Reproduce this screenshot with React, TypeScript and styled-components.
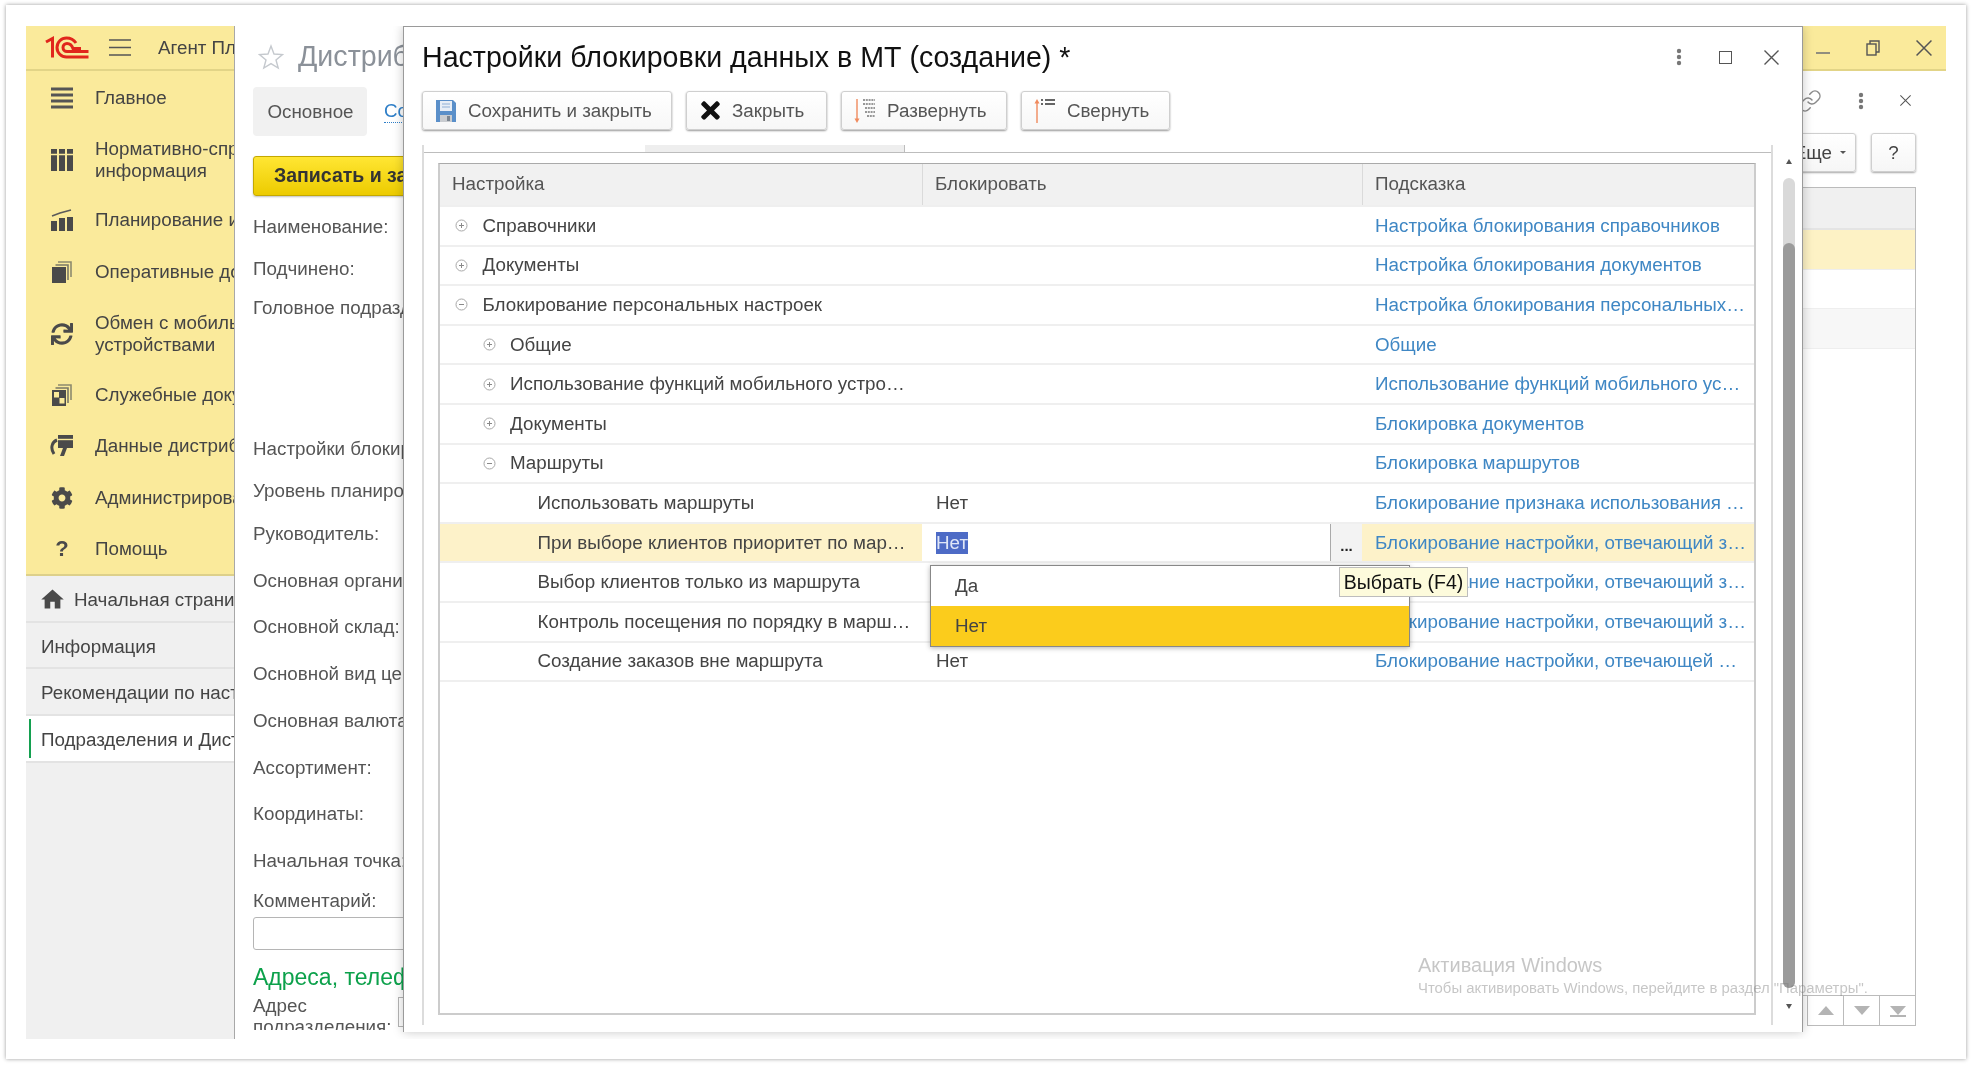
import React from "react";
import styled, { createGlobalStyle } from "styled-components";
import { FaCog, FaSync, FaTimes } from "react-icons/fa";
import { MdHome } from "react-icons/md";
import { Link as LinkIcon } from "lucide-react";

const GlobalStyle = createGlobalStyle`
  html, body {
    margin: 0;
    padding: 0;
    background: #fff;
    overflow: hidden;
  }
  * {
    box-sizing: border-box;
  }
  svg {
    flex-shrink: 0;
  }
`;

const font = `"Liberation Sans", Arial, sans-serif`;
const yellow = "#faea9b";
const textSize = "18.8px";

const Logo = () => (
  <svg width="45" height="23" viewBox="0 0 45 23" fill="none" stroke="#e1261c" strokeWidth="3">
    <path d="M1 6 L7.5 2.5 V21.5" />
    <path d="M43.5 21 H21.5 A9.5 9.5 0 0 1 21.5 2 C26 2 29 4 31 7" />
    <path d="M43.5 15.5 H22 A4 4 0 0 1 22 7.5 C25 7.5 27 9.5 28 12.5 H36" />
  </svg>
);

const Burger = () => (
  <svg width="22" height="17" viewBox="0 0 22 17" stroke="#555" strokeWidth="1.6">
    <path d="M0 1 H22 M0 8.5 H22 M0 16 H22" />
  </svg>
);

const MainIcon = () => (
  <svg width="22" height="22" viewBox="0 0 22 22" stroke="#555" strokeWidth="3">
    <path d="M0 2 H22 M0 8 H22 M0 14 H22 M0 20 H22" />
  </svg>
);

const RefIcon = () => (
  <svg width="22" height="22" viewBox="0 0 22 22" fill="#4a4a4a">
    <rect x="0" y="0" width="6" height="22" />
    <rect x="8" y="0" width="6" height="22" />
    <rect x="16" y="0" width="6" height="22" />
    <path d="M0 5.5 H22" stroke={yellow} strokeWidth="1.5" />
  </svg>
);

const PlanIcon = () => (
  <svg width="22" height="22" viewBox="0 0 22 22" fill="#4a4a4a">
    <rect x="0" y="12" width="6" height="10" />
    <rect x="8" y="9" width="6" height="13" />
    <rect x="16" y="8" width="6" height="14" />
    <path d="M1 7 L9 4 L20 1" stroke="#5a5a5a" strokeWidth="1.6" fill="none" />
  </svg>
);

const PagesIcon = ({ $inner }: { $inner?: boolean }) => (
  <svg width="20" height="22" viewBox="0 0 20 22" fill="#4a4a4a">
    <path d="M6 1 H19 V16" fill="none" stroke="#8d8a6e" strokeWidth="1.6" />
    <path d="M3.5 4 H16 V19" fill="none" stroke="#7a7866" strokeWidth="1.6" />
    <rect x="0" y="6" width="14" height="16" />
    {$inner && (
      <>
        <rect x="2" y="8" width="5" height="5.5" fill={yellow} />
        <rect x="7.5" y="14" width="5" height="5.5" fill={yellow} />
      </>
    )}
  </svg>
);

const DataIcon = () => (
  <svg width="24" height="22" viewBox="0 0 24 22">
    <path d="M7 5 C2 7 0 13 4 19" fill="none" stroke="#4a4a4a" strokeWidth="3" />
    <path d="M8 0 H23 V13 H17 L14 21 H10 L13 13 H8 Z" fill="#4a4a4a" />
    <path d="M8 4.5 H23" stroke={yellow} strokeWidth="1.4" />
  </svg>
);

const StarIcon = () => (
  <svg width="26" height="26" viewBox="0 0 26 26" fill="none" stroke="#c5c9ce" strokeWidth="1.4">
    <path d="M13 2 L16 10 L24.5 10.5 L18 16 L20.2 24 L13 19.6 L5.8 24 L8 16 L1.5 10.5 L10 10 Z" />
  </svg>
);

const SaveIcon = () => (
  <svg width="22" height="24" viewBox="0 0 22 24">
    <path d="M1 1 H18 L21 4 V23 H1 Z" fill="#5a8fc9" />
    <rect x="5" y="2" width="12" height="10" fill="#e8eef6" />
    <path d="M7 5 H15 M7 8 H15" stroke="#8fb0d6" strokeWidth="1.2" />
    <rect x="5" y="16" width="12" height="7" fill="#c9ccd0" />
    <rect x="12" y="17" width="3" height="5" fill="#7c8590" />
  </svg>
);

const ExpandIcon = () => (
  <svg width="22" height="26" viewBox="0 0 22 26" fill="none">
    <path d="M3 1 V23" stroke="#f08a5d" strokeWidth="1.4" />
    <path d="M0.5 20.5 L3 25 L5.5 20.5 Z" fill="#f08a5d" />
    <path d="M9 2 H21 M9 6 H21 M11 10 H21 M11 14 H21 M13 18 H21" stroke="#777" strokeWidth="1.6" strokeDasharray="2 0.8" />
  </svg>
);

const CollapseIcon = () => (
  <svg width="22" height="26" viewBox="0 0 22 26" fill="none">
    <path d="M3 3 V25" stroke="#f08a5d" strokeWidth="1.4" />
    <path d="M0.5 5.5 L3 1 L5.5 5.5 Z" fill="#f08a5d" />
    <path d="M7 2 H9 M7 6 H9 M11 2 H21 M11 6 H21" stroke="#666" strokeWidth="2" />
  </svg>
);

const TreeToggle = ({ $open }: { $open?: boolean }) => (
  <svg width="13" height="13" viewBox="0 0 13 13" fill="none" stroke="#a8a8a8">
    <circle cx="6.5" cy="6.5" r="5.5" />
    <path d={$open ? "M4 6.5 H9" : "M4 6.5 H9 M6.5 4 V9"} stroke="#8a8a8a" />
  </svg>
);

const Dots = () => (
  <svg width="6" height="18" viewBox="0 0 6 18" fill="#777">
    <circle cx="3" cy="3" r="2.2" />
    <circle cx="3" cy="9" r="2.2" />
    <circle cx="3" cy="15" r="2.2" />
  </svg>
);

const MinIcon = () => (
  <svg width="14" height="14" viewBox="0 0 14 14" stroke="#777" strokeWidth="1.6">
    <path d="M0 12 H14" />
  </svg>
);

const RestoreIcon = () => (
  <svg width="14" height="16" viewBox="0 0 14 16" fill="none" stroke="#555" strokeWidth="1.4">
    <rect x="1" y="4" width="9" height="11" />
    <path d="M4 4 V1 H13 V12 H10" />
  </svg>
);

const CloseIcon = ({ $size = 15 }: { $size?: number }) => (
  <svg width={$size} height={$size} viewBox="0 0 15 15" stroke="#555" strokeWidth="1.4">
    <path d="M0.5 0.5 L14.5 14.5 M14.5 0.5 L0.5 14.5" />
  </svg>
);

const Sheet = styled.div`
  width: 1972px;
  height: 1065px;
  padding: 5px 6px 6px;
  background: #fff;
  font-family: ${font};
  filter: blur(0.35px);
`;

const Card = styled.div`
  height: 100%;
  padding: 21px 20px 20px;
  background: #fff;
  box-shadow: 0 0 4px rgba(0, 0, 0, 0.4);
`;

const AppFrame = styled.div`
  position: relative;
  display: flex;
  flex-direction: column;
  height: 100%;
  overflow: hidden;
`;

const TopBar = styled.div`
  flex: none;
  display: flex;
  align-items: center;
  justify-content: space-between;
  height: 45px;
  padding: 0 14px 0 19px;
  background: ${yellow};
  border-bottom: 2px solid #e2d487;
`;

const TopLeft = styled.div`
  display: flex;
  align-items: center;
`;

const AppName = styled.span`
  margin-left: 27px;
  font-size: ${textSize};
  color: #444;
`;

const BurgerSlot = styled.span`
  display: flex;
  margin-left: 19px;
`;

const WindowButtons = styled.div`
  display: flex;
  align-items: center;
  gap: 36px;
`;

const Body = styled.div`
  flex: 1;
  display: flex;
  min-height: 0;
`;

const Sidebar = styled.div`
  flex: none;
  display: flex;
  flex-direction: column;
  width: 209px;
  background: #f0f0f0;
`;

const Sections = styled.div`
  padding-bottom: 1px;
  background: ${yellow};
  border-bottom: 2px solid #ddd08a;
`;

const SectionItem = styled.div<{ $h: number }>`
  display: flex;
  align-items: center;
  height: ${(p) => p.$h}px;
  padding-left: 25px;
  color: #444;
  font-size: ${textSize};
  line-height: 22px;
  white-space: nowrap;
`;

const SectionIcon = styled.span`
  flex: none;
  display: flex;
  align-items: center;
  justify-content: center;
  width: 22px;
  height: 24px;
  margin-right: 22px;
  color: #4a4a4a;
  font-size: 22px;
  font-weight: 700;
`;

const OpenTab = styled.div<{ $active?: boolean }>`
  position: relative;
  display: flex;
  align-items: center;
  gap: 8px;
  height: 46.7px;
  padding: 3px 0 0 15px;
  background: ${(p) => (p.$active ? "#fff" : "#f0f0f0")};
  border-bottom: 2px solid #e3e3e3;
  color: #444;
  font-size: ${textSize};
  white-space: nowrap;

  ${(p) =>
    p.$active &&
    `&::before {
      content: "";
      position: absolute;
      left: 3px;
      top: 3px;
      bottom: 3px;
      width: 2px;
      background: #14a050;
    }`}
`;

const HomeIcon = styled(MdHome)`
  margin-left: -2px;
  color: #4a4a4a;
  font-size: 27px;
`;

const Page = styled.div`
  flex: 1;
  display: flex;
  flex-direction: column;
  align-items: flex-end;
  padding: 0 30px 13px 0;
  background: #fff;
`;

const PageHead = styled.div`
  flex: none;
  display: flex;
  align-items: center;
  gap: 36px;
  height: 62px;
  padding: 0 5px 3px 0;
  color: #8a8a8a;
`;

const PageTools = styled.div`
  flex: none;
  display: flex;
  gap: 15px;
`;

const PageTool = styled.div`
  display: flex;
  align-items: center;
  justify-content: center;
  gap: 8px;
  height: 39px;
  min-width: 45px;
  padding: 0 9px;
  background: linear-gradient(#fff, #f6f6f6);
  border: 1px solid #cfcfcf;
  border-radius: 3px;
  box-shadow: 0 1px 2px rgba(0, 0, 0, 0.35);
  color: #444;
  font-size: ${textSize};
`;

const Caret = styled.span`
  width: 0;
  height: 0;
  border: 3.5px solid transparent;
  border-top-color: #555;
  border-bottom: 0;
`;

const SideTable = styled.div`
  flex: 1;
  display: flex;
  flex-direction: column;
  width: 500px;
  margin-top: 15px;
  border: 1px solid #bbb;
  border-bottom: 0;
`;

const SideHead = styled.div`
  height: 42px;
  background: #f0f0f0;
  border-bottom: 2px solid #e4e4e4;
`;

const SideRow = styled.div<{ $tone: string }>`
  height: 39.6px;
  background: ${(p) => p.$tone};
  border-bottom: 1px solid #eee;
`;

const SideFill = styled.div`
  flex: 1;
`;

const Pager = styled.div`
  flex: none;
  display: flex;
  justify-content: flex-end;
  height: 31px;
  border-top: 1px solid #bbb;
`;

const PagerButton = styled.div`
  display: flex;
  align-items: center;
  justify-content: center;
  width: 36px;
  border-left: 1px solid #bbb;
  border-bottom: 1px solid #bbb;
`;

const Triangle = styled.span<{ $up?: boolean; $bar?: boolean }>`
  width: 0;
  height: 0;
  border: 8px solid transparent;
  ${(p) =>
    p.$up
      ? "border-bottom: 9px solid #b4b4b4; border-top: 0;"
      : "border-top: 9px solid #b4b4b4; border-bottom: 0;"}
  ${(p) => p.$bar && "box-shadow: 0 2px 0 #b4b4b4;"}
`;

const FormWindow = styled.div`
  position: absolute;
  left: 208px;
  top: 0;
  bottom: 0;
  width: 170px;
  background: #fff;
  border-left: 1px solid #a8a8a8;
`;

const FormInner = styled.div`
  height: 1004px;
  padding-left: 18px;
  overflow: hidden;
  white-space: nowrap;
`;

const FormHead = styled.div`
  display: flex;
  align-items: center;
  gap: 14px;
  height: 61px;
  padding-left: 5px;
  color: #8b9199;
  font-size: 28.6px;
`;

const FormTabs = styled.div`
  display: flex;
  align-items: center;
  gap: 17px;
`;

const FormTab = styled.div`
  flex: none;
  display: flex;
  align-items: center;
  justify-content: center;
  width: 114px;
  height: 49px;
  padding: 1px 0 0 1px;
  background: #f1f1f1;
  border-radius: 4px;
  color: #555;
  font-size: ${textSize};
`;

const FormLink = styled.span`
  color: #2f7fc8;
  font-size: ${textSize};
  border-bottom: 1px dotted #2f7fc8;
`;

const WriteButton = styled.div`
  display: flex;
  align-items: center;
  width: 240px;
  height: 40px;
  margin-top: 20px;
  padding: 0 0 2px 20px;
  background: linear-gradient(#ffe633, #eccb00);
  border: 1px solid #c4a800;
  border-radius: 3px;
  box-shadow: 0 1px 2px rgba(0, 0, 0, 0.25);
  color: #333;
  font-size: 19.5px;
  font-weight: 700;
`;

const FormLabel = styled.div<{ $gap: number }>`
  margin-top: ${(p) => p.$gap}px;
  color: #555;
  font-size: ${textSize};
  line-height: 24px;
`;

const CommentBox = styled.div`
  width: 240px;
  height: 33px;
  margin-top: 4px;
  border: 1px solid #b5b5b5;
  border-radius: 3px;
`;

const AddressHead = styled.div`
  margin-top: 13px;
  color: #0ca14b;
  font-size: 23px;
  line-height: 28px;
`;

const AddressRow = styled.div`
  display: flex;
  margin-top: 4px;
`;

const AddressLabel = styled.div`
  flex: none;
  width: 145px;
  color: #555;
  font-size: ${textSize};
  line-height: 21px;
`;

const AddressBox = styled.div`
  width: 60px;
  height: 30px;
  margin-top: 2px;
  border: 1px solid #b5b5b5;
`;

const Modal = styled.div`
  position: absolute;
  left: 377px;
  top: 0;
  display: flex;
  flex-direction: column;
  width: 1400px;
  height: 1006px;
  background: #fff;
  border: 1px solid #9a9a9a;
  border-bottom: 0;
  box-shadow: 0 0 10px rgba(0, 0, 0, 0.22);
`;

const ModalHead = styled.div`
  flex: none;
  display: flex;
  align-items: center;
  height: 64px;
  padding: 0 23px 4px 18px;
`;

const ModalTitle = styled.h1`
  flex: 1;
  margin: 0;
  color: #111;
  font-size: 28.6px;
  font-weight: 400;
`;

const ModalControls = styled.div`
  display: flex;
  align-items: center;
  gap: 32px;
`;

const ControlDots = styled.span`
  display: flex;
  margin-right: 5px;
`;

const MaxBox = styled.span`
  width: 13px;
  height: 13px;
  border: 1.5px solid #555;
`;

const Toolbar = styled.div`
  flex: none;
  display: flex;
  gap: 14px;
  padding-left: 18px;
`;

const ToolButton = styled.div<{ $w: number }>`
  display: flex;
  align-items: center;
  gap: 10px;
  width: ${(p) => p.$w}px;
  height: 39px;
  padding-left: 11px;
  background: linear-gradient(#fff, #f7f7f7);
  border: 1px solid #cfcfcf;
  border-radius: 3px;
  box-shadow: 0 1px 2px rgba(0, 0, 0, 0.4);
  color: #555;
  font-size: ${textSize};
  white-space: nowrap;
`;

const ToolIcon = styled.span`
  flex: none;
  display: flex;
  align-items: center;
  justify-content: center;
  width: 24px;
  color: #111;
  font-size: 27px;
`;

const ModalBody = styled.div`
  flex: 1;
  display: flex;
  min-height: 0;
  margin-top: 15px;
  padding: 0 0 7px 18px;
`;

const Group = styled.div`
  flex: none;
  display: flex;
  flex-direction: column;
  width: 1351px;
  border-left: 2px solid #dcdcdc;
  border-right: 2px solid #dcdcdc;
`;

const GroupTop = styled.div`
  flex: none;
  display: flex;
  height: 8px;
  padding-left: 221px;
  border-bottom: 1px solid #bdbdbd;
`;

const GroupTabStub = styled.div`
  width: 260px;
  background: #eee;
  border-right: 1px solid #bdbdbd;
`;

const Grid = styled.div`
  flex: 1;
  margin: 10px 15px 10px 14px;
  border: 2px solid #ccc;
  border-top-width: 1px;
  border-top-color: #aaa;
  min-height: 0;
`;

const HeadRow = styled.div`
  display: grid;
  grid-template-columns: 482px 440px 1fr;
  height: 41px;
  background: #f1f1f1;
`;

const HeadCell = styled.div`
  display: flex;
  align-items: center;
  padding: 0 0 2px 12px;
  color: #555;
  font-size: ${textSize};

  & + & {
    border-left: 1px solid #dadada;
  }
`;

const Row = styled.div`
  display: grid;
  grid-template-columns: 482px 440px 1fr;
  height: 39.6px;
  border-top: 2px solid #efefef;

  &:last-child {
    height: 41.6px;
    border-bottom: 2px solid #efefef;
  }
`;

const NameCell = styled.div<{ $level: number; $selected?: boolean }>`
  display: flex;
  align-items: center;
  padding-left: ${(p) => 15 + p.$level * 27.5}px;
  background: ${(p) => (p.$selected ? "#fdf2c9" : "transparent")};
  color: #444;
  font-size: ${textSize};
  white-space: nowrap;
`;

const ToggleSlot = styled.span`
  flex: none;
  display: flex;
  width: 27.5px;
`;

const ValueCell = styled.div`
  display: flex;
  align-items: center;
  padding-left: 14px;
  color: #444;
  font-size: ${textSize};
`;

const SelectedValue = styled.span`
  padding: 0;
  background: #4d6bc6;
  color: #dfe6f7;
  line-height: 22px;
`;

const EditorSpacer = styled.span`
  flex: 1;
`;

const PickButton = styled.span`
  flex: none;
  display: flex;
  align-items: flex-end;
  justify-content: center;
  align-self: stretch;
  width: 32px;
  padding-bottom: 8px;
  background: #f3f3f3;
  border-left: 1px solid #aaa;
  color: #222;
  font-size: 15px;
  font-weight: 700;
  line-height: 14px;
`;

const HintCell = styled.div<{ $selected?: boolean }>`
  display: flex;
  align-items: center;
  padding-left: 13px;
  background: ${(p) => (p.$selected ? "#fdf2c9" : "transparent")};
  color: #3f87c4;
  font-size: ${textSize};
  white-space: nowrap;
  overflow: hidden;
`;

const ScrollColumn = styled.div`
  flex: none;
  display: flex;
  flex-direction: column;
  align-items: center;
  width: 12px;
  margin-left: 10px;
`;

const ScrollArrow = styled.div<{ $h: number }>`
  flex: none;
  display: flex;
  align-items: center;
  justify-content: center;
  height: ${(p) => p.$h}px;
`;

const ScrollTriangle = styled.span<{ $up?: boolean }>`
  width: 0;
  height: 0;
  border: 3px solid transparent;
  ${(p) =>
    p.$up
      ? "border-bottom: 5px solid #555; border-top: 0;"
      : "border-top: 5px solid #555; border-bottom: 0;"}
`;

const ScrollTrack = styled.div`
  flex: 1;
  width: 12px;
  padding-top: 65px;
  background: #d9d9d9;
  border-radius: 6px;
`;

const ScrollThumb = styled.div`
  height: 100%;
  background: #9b9b9b;
  border-radius: 6px;
`;

const Dropdown = styled.div`
  position: absolute;
  left: 526px;
  top: 538px;
  width: 480px;
  height: 82px;
  background: #fff;
  border: 1px solid #888;
  box-shadow: 0 1px 5px rgba(0, 0, 0, 0.3);
`;

const DropdownItem = styled.div<{ $active?: boolean }>`
  display: flex;
  align-items: center;
  height: 40px;
  padding-left: 24px;
  background: ${(p) => (p.$active ? "#fbcc1c" : "#fff")};
  color: #444;
  font-size: ${textSize};
`;

const Tip = styled.div`
  position: absolute;
  left: 935px;
  top: 540px;
  display: flex;
  align-items: center;
  justify-content: center;
  width: 129px;
  height: 30px;
  background: #fdfbdc;
  border: 1px solid #bdbdbd;
  color: #111;
  font-size: 19.5px;
  white-space: nowrap;
`;

const Watermark = styled.div`
  position: absolute;
  left: 1392px;
  top: 926px;
  color: rgba(120, 120, 120, 0.42);
  pointer-events: none;
  white-space: nowrap;
`;

const WatermarkTitle = styled.div`
  font-size: 20px;
  line-height: 26px;
`;

const WatermarkText = styled.div`
  font-size: 14.9px;
  line-height: 20px;
`;

const sections = [
  { h: 54, text: "Главное", icon: <MainIcon /> },
  { h: 70, text: <>Нормативно-справочная<br />информация</>, icon: <RefIcon /> },
  { h: 50, text: "Планирование и", icon: <PlanIcon /> },
  { h: 54, text: "Оперативные документы", icon: <PagesIcon /> },
  { h: 70, text: <>Обмен с мобильными<br />устройствами</>, icon: <FaSync /> },
  { h: 52, text: "Служебные документы", icon: <PagesIcon $inner /> },
  { h: 50, text: "Данные дистрибьютора", icon: <DataIcon /> },
  { h: 54, text: "Администрирование", icon: <FaCog /> },
  { h: 48, text: "Помощь", icon: "?" },
];

const formLabels = [
  { gap: 19, text: "Наименование:" },
  { gap: 18, text: "Подчинено:" },
  { gap: 15, text: "Головное подразделение:" },
  { gap: 117, text: "Настройки блокировки:" },
  { gap: 18, text: "Уровень планирования:" },
  { gap: 19, text: "Руководитель:" },
  { gap: 23, text: "Основная организация:" },
  { gap: 22, text: "Основной склад:" },
  { gap: 23, text: "Основной вид цены:" },
  { gap: 23, text: "Основная валюта:" },
  { gap: 23, text: "Ассортимент:" },
  { gap: 22, text: "Координаты:" },
  { gap: 23, text: "Начальная точка:" },
  { gap: 16, text: "Комментарий:" },
];

const rows = [
  { level: 0, toggle: "closed", name: "Справочники", hint: "Настройка блокирования справочников" },
  { level: 0, toggle: "closed", name: "Документы", hint: "Настройка блокирования документов" },
  { level: 0, toggle: "open", name: "Блокирование персональных настроек", hint: "Настройка блокирования персональных…" },
  { level: 1, toggle: "closed", name: "Общие", hint: "Общие" },
  { level: 1, toggle: "closed", name: "Использование функций мобильного устро…", hint: "Использование функций мобильного ус…" },
  { level: 1, toggle: "closed", name: "Документы", hint: "Блокировка документов" },
  { level: 1, toggle: "open", name: "Маршруты", hint: "Блокировка маршрутов" },
  { level: 2, name: "Использовать маршруты", value: "Нет", hint: "Блокирование признака использования …" },
  { level: 2, name: "При выборе клиентов приоритет по мар…", selected: true, hint: "Блокирование настройки, отвечающий з…" },
  { level: 2, name: "Выбор клиентов только из маршрута", hint: "Блокирование настройки, отвечающий з…" },
  { level: 2, name: "Контроль посещения по порядку в марш…", hint: "Блокирование настройки, отвечающий з…" },
  { level: 2, name: "Создание заказов вне маршрута", value: "Нет", hint: "Блокирование настройки, отвечающей  …" },
];

export default function App() {
  return (
    <Sheet>
      <GlobalStyle />
      <Card>
        <AppFrame>
          <TopBar>
            <TopLeft>
              <Logo />
              <BurgerSlot>
                <Burger />
              </BurgerSlot>
              <AppName>Агент Плюс</AppName>
            </TopLeft>
            <WindowButtons>
              <MinIcon />
              <RestoreIcon />
              <CloseIcon $size={16} />
            </WindowButtons>
          </TopBar>
          <Body>
            <Sidebar>
              <Sections>
                {sections.map((s, i) => (
                  <SectionItem key={i} $h={s.h}>
                    <SectionIcon>{s.icon}</SectionIcon>
                    <span>{s.text}</span>
                  </SectionItem>
                ))}
              </Sections>
              <OpenTab>
                <HomeIcon />
                Начальная страница
              </OpenTab>
              <OpenTab>Информация</OpenTab>
              <OpenTab>Рекомендации по настройке</OpenTab>
              <OpenTab $active>Подразделения и Дистрибьюторы</OpenTab>
            </Sidebar>
            <Page>
              <PageHead>
                <LinkIcon size={24} strokeWidth={1.5} />
                <Dots />
                <CloseIcon $size={11} />
              </PageHead>
              <PageTools>
                <PageTool>
                  Еще
                  <Caret />
                </PageTool>
                <PageTool>?</PageTool>
              </PageTools>
              <SideTable>
                <SideHead />
                <SideRow $tone="#fdf2c5" />
                <SideRow $tone="#fff" />
                <SideRow $tone="#f7f7f7" />
                <SideFill />
                <Pager>
                  <PagerButton>
                    <Triangle $up />
                  </PagerButton>
                  <PagerButton>
                    <Triangle />
                  </PagerButton>
                  <PagerButton>
                    <Triangle $bar />
                  </PagerButton>
                </Pager>
              </SideTable>
            </Page>
          </Body>

          <FormWindow>
            <FormInner>
              <FormHead>
                <StarIcon />
                Дистрибьютор
              </FormHead>
              <FormTabs>
                <FormTab>Основное</FormTab>
                <FormLink>Состав</FormLink>
              </FormTabs>
              <WriteButton>Записать и закрыть</WriteButton>
              {formLabels.map((l) => (
                <FormLabel key={l.text} $gap={l.gap}>
                  {l.text}
                </FormLabel>
              ))}
              <CommentBox />
              <AddressHead>Адреса, телефоны</AddressHead>
              <AddressRow>
                <AddressLabel>
                  Адрес
                  <br />
                  подразделения:
                </AddressLabel>
                <AddressBox />
              </AddressRow>
            </FormInner>
          </FormWindow>

          <Modal>
            <ModalHead>
              <ModalTitle>Настройки блокировки данных в МТ (создание) *</ModalTitle>
              <ModalControls>
                <ControlDots>
                  <Dots />
                </ControlDots>
                <MaxBox />
                <CloseIcon />
              </ModalControls>
            </ModalHead>
            <Toolbar>
              <ToolButton $w={250}>
                <ToolIcon>
                  <SaveIcon />
                </ToolIcon>
                Сохранить и закрыть
              </ToolButton>
              <ToolButton $w={141}>
                <ToolIcon>
                  <FaTimes />
                </ToolIcon>
                Закрыть
              </ToolButton>
              <ToolButton $w={166}>
                <ToolIcon>
                  <ExpandIcon />
                </ToolIcon>
                Развернуть
              </ToolButton>
              <ToolButton $w={149}>
                <ToolIcon>
                  <CollapseIcon />
                </ToolIcon>
                Свернуть
              </ToolButton>
            </Toolbar>
            <ModalBody>
              <Group>
                <GroupTop>
                  <GroupTabStub />
                </GroupTop>
                <Grid>
                  <HeadRow>
                    <HeadCell>Настройка</HeadCell>
                    <HeadCell>Блокировать</HeadCell>
                    <HeadCell>Подсказка</HeadCell>
                  </HeadRow>
                  {rows.map((r, i) => (
                    <Row key={i}>
                      <NameCell $level={r.level} $selected={r.selected}>
                        {r.toggle ? (
                          <ToggleSlot>
                            <TreeToggle $open={r.toggle === "open"} />
                          </ToggleSlot>
                        ) : (
                          <ToggleSlot />
                        )}
                        {r.name}
                      </NameCell>
                      <ValueCell>
                        {r.selected ? (
                          <>
                            <SelectedValue>Нет</SelectedValue>
                            <EditorSpacer />
                            <PickButton>...</PickButton>
                          </>
                        ) : (
                          r.value
                        )}
                      </ValueCell>
                      <HintCell $selected={r.selected}>{r.hint}</HintCell>
                    </Row>
                  ))}
                </Grid>
              </Group>
              <ScrollColumn>
                <ScrollArrow $h={33}>
                  <ScrollTriangle $up />
                </ScrollArrow>
                <ScrollTrack>
                  <ScrollThumb />
                </ScrollTrack>
                <ScrollArrow $h={37}>
                  <ScrollTriangle />
                </ScrollArrow>
              </ScrollColumn>
            </ModalBody>
            <Dropdown>
              <DropdownItem>Да</DropdownItem>
              <DropdownItem $active>Нет</DropdownItem>
            </Dropdown>
            <Tip>Выбрать (F4)</Tip>
          </Modal>

          <Watermark>
            <WatermarkTitle>Активация Windows</WatermarkTitle>
            <WatermarkText>Чтобы активировать Windows, перейдите в раздел "Параметры".</WatermarkText>
          </Watermark>
        </AppFrame>
      </Card>
    </Sheet>
  );
}
